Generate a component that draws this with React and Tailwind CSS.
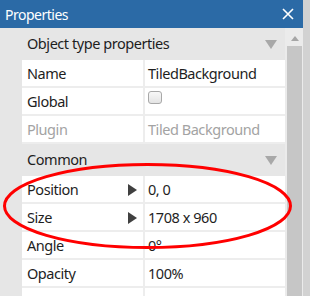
import React from "react";

const font = { fontFamily: '"Noto Sans", "Open Sans", sans-serif' };

function Row({ name, value, dim, arrow, children }) {
  return (
    <div className="flex h-[28px] border-b-2 border-[#ededed] bg-white">
      <div className={`flex w-[121px] items-center justify-between pl-[5px] pr-[6px] pt-[2px] ${dim ? "text-[#a3a3a3]" : "text-[#1e1e1e]"}`}>
        <span>{name}</span>
        {arrow && (
          <svg width="9" height="12" viewBox="0 0 9 12">
            <path d="M0 0 L9 6 L0 12 Z" fill="#404040" />
          </svg>
        )}
      </div>
      <div className={`flex flex-1 items-center border-l-2 border-[#ededed] pl-[3px] pt-[2px] ${dim ? "text-[#a3a3a3]" : "text-[#1e1e1e]"}`}>
        {children ?? value}
      </div>
    </div>
  );
}

function Header({ title }) {
  return (
    <div className="flex h-[32px] items-center justify-between bg-[#e6e6e6] pl-[5px] pr-[8px] text-[#1e1e1e]">
      <span>{title}</span>
      <svg width="12" height="9" viewBox="0 0 12 9">
        <path d="M0 0 L12 0 L6 9 Z" fill="#a8a8a8" />
      </svg>
    </div>
  );
}

export default function App() {
  return (
    <div className="relative flex h-[296px] w-[310px] overflow-hidden bg-[#e6e6e6] text-[14.5px] tracking-[-0.45px]" style={font}>
      <div className="flex w-[303px] flex-col">
        <div className="flex h-[28px] shrink-0 items-center justify-between bg-[#2b6aa6] pl-[5px] pr-[9px] text-[14px] tracking-[-0.5px] text-white">
          <span>Properties</span>
          <svg width="12" height="12" viewBox="0 0 12 12">
            <path d="M1 1 L11 11 M11 1 L1 11" stroke="white" strokeWidth="1.6" />
          </svg>
        </div>
        <div className="flex flex-1">
          <div className="w-[22px] bg-[#e6e6e6]" />
          <div className="flex w-[263px] flex-col">
            <Header title="Object type properties" />
            <Row name="Name" value="TiledBackground" />
            <Row name="Global">
              <div className="mb-[9px] h-[13px] w-[14px] rounded-[3px] border border-[#a8a8a8] bg-gradient-to-b from-[#f8f8f8] to-[#e4e4e4]" />
            </Row>
            <Row name="Plugin" value="Tiled Background" dim />
            <Header title="Common" />
            <Row name="Position" value="0, 0" arrow />
            <Row name="Size" value="1708 x 960" arrow />
            <Row name="Angle" value="0°" />
            <Row name="Opacity" value="100%" />
            <Row name="" value="" />
          </div>
          <div className="flex w-[18px] flex-col bg-[#ebebeb] pl-[2px] pr-[1px]">
            <div className="flex h-[18px] items-center justify-center pt-[2px]">
              <svg width="8" height="5" viewBox="0 0 8 5">
                <path d="M0 5 L4 0 L8 5 Z" fill="#a6a6a6" />
              </svg>
            </div>
            <div className="flex-1 bg-[#c6c6c6]" />
          </div>
        </div>
      </div>
      <div className="w-[7px] bg-[#d2d2d2]" />
      <svg className="pointer-events-none absolute left-0 top-0" width="310" height="296">
        <ellipse cx="147.5" cy="206" rx="143" ry="41.5" fill="none" stroke="#ff0000" strokeWidth="3" />
      </svg>
    </div>
  );
}
